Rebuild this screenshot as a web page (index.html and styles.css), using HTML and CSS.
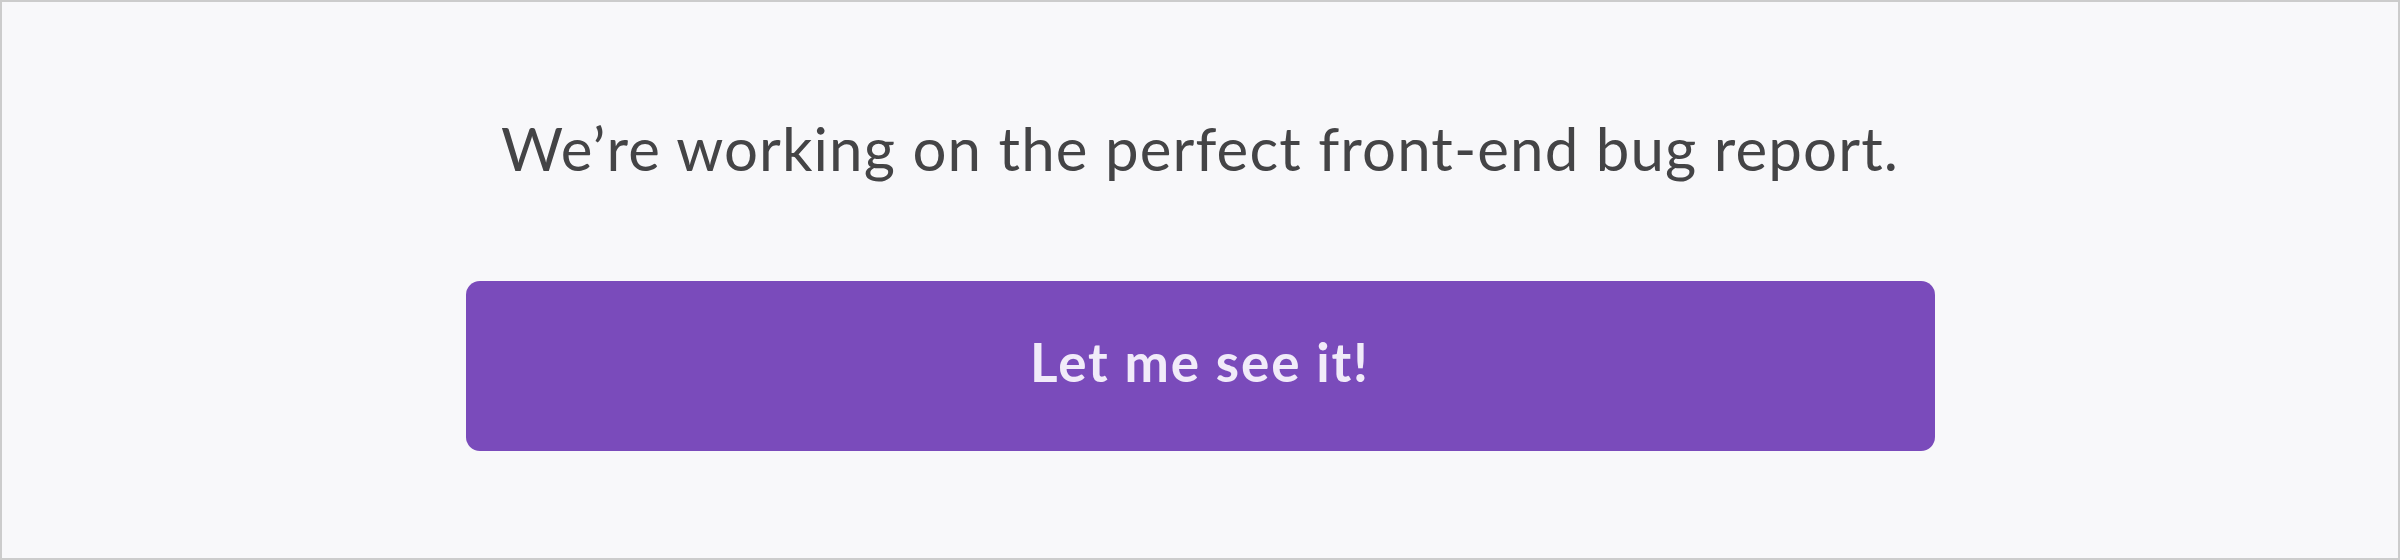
FILE: index.html
```html
<!DOCTYPE html>
<html lang="en">
<head>
<meta charset="utf-8">
<title>Bug report</title>
<link rel="stylesheet" href="styles.css">
</head>
<body>
<main class="frame">
  <p class="headline">We’re working on the perfect front-end bug report.</p>
  <button class="cta" type="button">Let me see it!</button>
</main>
</body>
</html>
```

FILE: styles.css
```css
html, body {
  margin: 0;
  padding: 0;
}
body {
  background: #f8f8fa;
  font-family: Lato, "Liberation Sans", sans-serif;
}
.frame {
  box-sizing: border-box;
  width: 2400px;
  height: 560px;
  border: 2px solid #cccccc;
  background: #f8f8fa;
  display: flex;
  flex-direction: column;
  align-items: center;
  padding-top: 110px;
}
.headline {
  margin: 0;
  font-size: 60px;
  line-height: 72px;
  letter-spacing: 1.1px;
  color: #444446;
  font-weight: 400;
}
.cta {
  margin-top: 97px;
  width: 1469px;
  height: 170px;
  border: 0;
  border-radius: 14px;
  background: #7a4bbb;
  color: #f1ebf9;
  font-family: Lato, "Liberation Sans", sans-serif;
  font-size: 53px;
  font-weight: 700;
  letter-spacing: 1.9px;
  display: flex;
  align-items: center;
  justify-content: center;
  padding: 0 0 10px;
}
```
